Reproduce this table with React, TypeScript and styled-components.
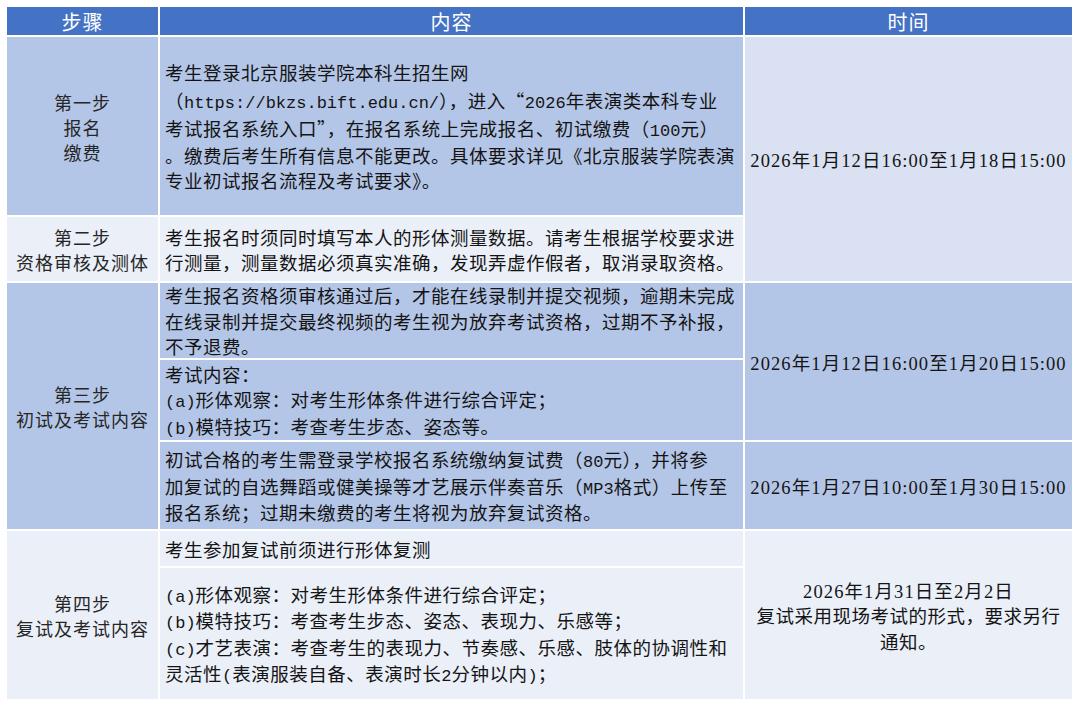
import React from "react";
import styled, { createGlobalStyle } from "styled-components";

const GlobalStyle = createGlobalStyle`
  html, body {
    margin: 0;
    padding: 0;
    background: #ffffff;
  }
  body {
    font-family: "Liberation Serif", "Noto Sans CJK SC", serif;
    color: #141414;
  }
`;

const Page = styled.div`
  padding: 7px;
`;

const Table = styled.div`
  display: grid;
  grid-template-columns: 151px 583px 327px;
  grid-template-rows: 28px 178px 64px 75px 80px 87px 35px 131px;
  gap: 2px;
  width: 1065px;
`;

const HeadCell = styled.div<{ $col: string }>`
  grid-column: ${(p) => p.$col};
  grid-row: 1;
  background: #4472c4;
  color: #ffffff;
  font-size: 20px;
  letter-spacing: 1px;
  display: flex;
  align-items: center;
  justify-content: center;
`;

const Cell = styled.div<{ $col: string; $row: string; $bg: string; $center?: boolean }>`
  grid-column: ${(p) => p.$col};
  grid-row: ${(p) => p.$row};
  background: ${(p) => p.$bg};
  display: flex;
  flex-direction: column;
  justify-content: center;
  align-items: ${(p) => (p.$center ? "center" : "flex-start")};
  text-align: ${(p) => (p.$center ? "center" : "left")};
  padding: ${(p) => (p.$center ? "6px 0 0 0" : "6px 0 0 5px")};
  font-size: 18.5px;
  line-height: 25.5px;
  letter-spacing: 0.5px;
  overflow: hidden;
`;

const Line = styled.span`
  display: block;
  white-space: nowrap;
`;

const StepLine = styled.span`
  display: block;
  white-space: nowrap;
  color: #262626;
  font-size: 18px;
  line-height: 25px;
  letter-spacing: 1px;
`;

// half-width latin runs, monospaced like the original sheet
const M = styled.span`
  font-family: "Liberation Mono", monospace;
  font-size: 17px;
  letter-spacing: 0;
`;

const Time = styled.span`
  display: block;
  white-space: nowrap;
  letter-spacing: 1.1px;
`;

const Quote = styled.span`
  font-family: "Noto Sans CJK SC", sans-serif;
  font-feature-settings: "fwid";
`;

const MID = "#b4c6e7";
const PALE = "#d9e1f2";
const LIGHT = "#eaeff8";

export default function App() {
  return (
    <>
      <GlobalStyle />
      <Page>
        <Table>
          <HeadCell $col="1">步骤</HeadCell>
          <HeadCell $col="2">内容</HeadCell>
          <HeadCell $col="3">时间</HeadCell>

          <Cell $col="1" $row="2" $bg={MID} $center>
            <StepLine>第一步</StepLine>
            <StepLine>报名</StepLine>
            <StepLine>缴费</StepLine>
          </Cell>
          <Cell $col="2" $row="2" $bg={MID}>
            <Line>考生登录北京服装学院本科生招生网</Line>
            <Line>
              （<M>https://bkzs.bift.edu.cn/</M>），进入<Quote>“</Quote>
              <M>2026</M>年表演类本科专业
            </Line>
            <Line>
              考试报名系统入口<Quote>”</Quote>，在报名系统上完成报名、初试缴费（<M>100</M>元）
            </Line>
            <Line>。缴费后考生所有信息不能更改。具体要求详见《北京服装学院表演</Line>
            <Line>专业初试报名流程及考试要求》。</Line>
          </Cell>
          <Cell $col="3" $row="2 / 4" $bg={PALE} $center>
            <Time>2026年1月12日16:00至1月18日15:00</Time>
          </Cell>

          <Cell $col="1" $row="3" $bg={LIGHT} $center>
            <StepLine>第二步</StepLine>
            <StepLine>资格审核及测体</StepLine>
          </Cell>
          <Cell $col="2" $row="3" $bg={LIGHT}>
            <Line>考生报名时须同时填写本人的形体测量数据。请考生根据学校要求进</Line>
            <Line>行测量，测量数据必须真实准确，发现弄虚作假者，取消录取资格。</Line>
          </Cell>

          <Cell $col="1" $row="4 / 7" $bg={MID} $center>
            <StepLine>第三步</StepLine>
            <StepLine>初试及考试内容</StepLine>
          </Cell>
          <Cell $col="2" $row="4" $bg={MID}>
            <Line>考生报名资格须审核通过后，才能在线录制并提交视频，逾期未完成</Line>
            <Line>在线录制并提交最终视频的考生视为放弃考试资格，过期不予补报，</Line>
            <Line>不予退费。</Line>
          </Cell>
          <Cell $col="2" $row="5" $bg={MID}>
            <Line>考试内容：</Line>
            <Line>
              <M>(a)</M>形体观察：对考生形体条件进行综合评定；
            </Line>
            <Line>
              <M>(b)</M>模特技巧：考查考生步态、姿态等。
            </Line>
          </Cell>
          <Cell $col="3" $row="4 / 6" $bg={MID} $center>
            <Time>2026年1月12日16:00至1月20日15:00</Time>
          </Cell>
          <Cell $col="2" $row="6" $bg={MID}>
            <Line>
              初试合格的考生需登录学校报名系统缴纳复试费（<M>80</M>元），并将参
            </Line>
            <Line>
              加复试的自选舞蹈或健美操等才艺展示伴奏音乐（<M>MP3</M>格式）上传至
            </Line>
            <Line>报名系统；过期未缴费的考生将视为放弃复试资格。</Line>
          </Cell>
          <Cell $col="3" $row="6" $bg={MID} $center>
            <Time>2026年1月27日10:00至1月30日15:00</Time>
          </Cell>

          <Cell $col="1" $row="7 / 9" $bg={LIGHT} $center>
            <StepLine>第四步</StepLine>
            <StepLine>复试及考试内容</StepLine>
          </Cell>
          <Cell $col="2" $row="7" $bg={LIGHT}>
            <Line>考生参加复试前须进行形体复测</Line>
          </Cell>
          <Cell $col="2" $row="8" $bg={LIGHT}>
            <Line>
              <M>(a)</M>形体观察：对考生形体条件进行综合评定；
            </Line>
            <Line>
              <M>(b)</M>模特技巧：考查考生步态、姿态、表现力、乐感等；
            </Line>
            <Line>
              <M>(c)</M>才艺表演：考查考生的表现力、节奏感、乐感、肢体的协调性和
            </Line>
            <Line>
              灵活性<M>(</M>表演服装自备、表演时长<M>2</M>分钟以内<M>)</M>；
            </Line>
          </Cell>
          <Cell $col="3" $row="7 / 9" $bg={LIGHT} $center>
            <Time>2026年1月31日至2月2日</Time>
            <Line>复试采用现场考试的形式，要求另行</Line>
            <Line>通知。</Line>
          </Cell>
        </Table>
      </Page>
    </>
  );
}
